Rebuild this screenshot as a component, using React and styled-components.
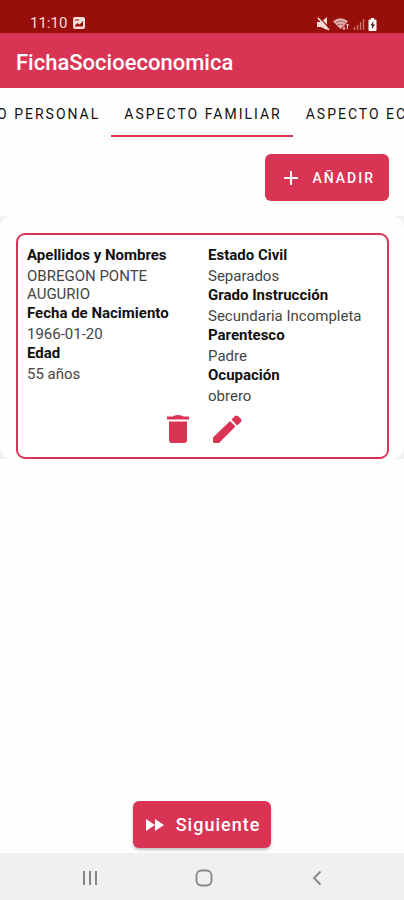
import React, { useState } from "react";
import styled, { createGlobalStyle } from "styled-components";

const GlobalStyle = createGlobalStyle`
  * {
    box-sizing: border-box;
  }
  body {
    margin: 0;
    background: #fefefe;
    font-family: Roboto, "Liberation Sans", sans-serif;
  }
  button {
    font-family: inherit;
    border: 0;
    cursor: pointer;
  }
`;

const Screen = styled.div`
  display: flex;
  flex-direction: column;
  min-height: 100vh;
  overflow-x: hidden;
`;

const StatusBar = styled.div`
  display: flex;
  align-items: flex-end;
  justify-content: space-between;
  height: 33px;
  padding: 0 27px 2px 30px;
  background: #970e0a;
  color: #f5dcd6;
  font-size: 15px;
  line-height: 16px;
`;

const StatusGroup = styled.div`
  display: flex;
  align-items: center;
  gap: ${(props) => props.$gap}px;
`;

const AppBar = styled.header`
  display: flex;
  align-items: center;
  height: 55px;
  padding: 3px 16px 0;
  background: #d93454;
`;

const PageTitle = styled.h1`
  margin: 0;
  color: #fff;
  font-size: 22px;
  font-weight: 500;
`;

const Tabs = styled.nav`
  display: grid;
  grid-template-columns: minmax(0, 1fr) auto minmax(0, 1fr);
  height: 49px;
`;

const TabSlot = styled.div`
  display: flex;
  justify-content: ${(props) => props.$side};
  overflow: hidden;
`;

const Tab = styled.button`
  flex: none;
  padding: 4px 11px 0 13px;
  background: none;
  border-bottom: 2px solid
    ${(props) => (props.$active ? "#d93454" : "transparent")};
  color: #111;
  font-size: 14px;
  font-weight: 400;
  letter-spacing: 2px;
  white-space: nowrap;
`;

const Toolbar = styled.div`
  display: flex;
  justify-content: flex-end;
  padding: 17px 15px 15px;
`;

const Button = styled.button`
  display: flex;
  align-items: center;
  gap: ${(props) => props.$gap}px;
  height: 47px;
  padding: 0 ${(props) => props.$end}px 0 ${(props) => props.$start}px;
  border-radius: 6px;
  background: #d93454;
  box-shadow: ${(props) =>
    props.$raised ? "0 2px 3px rgba(0, 0, 0, 0.25)" : "none"};
  color: #fff;
  font-size: ${(props) => props.$size}px;
  font-weight: 500;
  letter-spacing: ${(props) => props.$spacing}px;
`;

const ListArea = styled.main`
  background: #f1f1f1;
`;

const ListItem = styled.div`
  padding: 17px 15px 0 16px;
  border-radius: 12px;
  background: #fefefe;
`;

const Card = styled.article`
  padding: 11px 10px 10px 9px;
  border: 2px solid #d93454;
  border-radius: 9px;
  background: #fff;
`;

const Columns = styled.div`
  display: grid;
  grid-template-columns: 1fr 1fr;
  gap: 12px;
`;

const Fields = styled.dl`
  margin: 0;
  font-size: 15px;
`;

const Label = styled.dt`
  padding-bottom: 1px;
  color: #111;
  font-weight: 700;
  line-height: 18px;
`;

const Value = styled.dd`
  margin: 0;
  padding: 2px 24px 1px 0;
  color: #444;
  line-height: 18px;
  font-weight: 400;
`;

const WideValue = styled(Value)`
  padding-right: 0;
`;

const Actions = styled.div`
  display: flex;
  justify-content: center;
  gap: 13px;
  padding-top: 5px;
`;

const IconButton = styled.button`
  display: flex;
  padding: 0;
  background: none;
  color: #d93454;
`;

const Footer = styled.footer`
  display: flex;
  justify-content: center;
  margin-top: auto;
  padding-bottom: 5px;
`;

const NavigationBar = styled.div`
  display: flex;
  justify-content: space-between;
  align-items: center;
  height: 47px;
  padding: 2px 75px 0 78px;
  background: #f0f0f0;
`;

const NavButton = styled.button`
  display: flex;
  padding: 0;
  background: none;
  color: #858585;
`;

const PictureIcon = () => (
  <svg width="14" height="14" viewBox="0 0 14 14">
    <rect x="1" y="1" width="12" height="12" rx="2" fill="#f5dcd6" />
    <path d="M3 9.5 5.5 7l2 1.5L11 5v5.5H3z" fill="#970e0a" />
    <path d="M3 4h4" stroke="#970e0a" />
  </svg>
);

const MuteIcon = () => (
  <svg width="13" height="14" viewBox="0 0 13 14">
    <path d="M0 5h4l6-5v13L4 10H0z" fill="currentColor" />
    <path d="M2 0l11 12" stroke="#970e0a" strokeWidth="1.2" />
    <path d="M1 1l11 12" stroke="currentColor" strokeWidth="1.8" />
  </svg>
);

const WifiIcon = () => (
  <svg width="17" height="14" viewBox="0 0 17 14">
    <path d="M0 4.5Q7.5-2 15 4.5L7.5 12z" fill="currentColor" opacity=".8" />
    <path
      d="M2.5 6Q7.5 2 12.5 6M4.5 8Q7.5 6 10.5 8"
      fill="none"
      stroke="#970e0a"
      strokeWidth=".6"
    />
    <path
      d="M11 12.5V9m-1.5 2L11 12.5l1.5-1.5M14.5 7v5M13 8.5 14.5 7 16 8.5"
      fill="none"
      stroke="currentColor"
    />
  </svg>
);

const SignalIcon = () => (
  <svg width="12" height="12" viewBox="0 0 12 12" opacity=".5">
    <path
      d="M1.5 12V9M4.5 12V7M7.5 12V4M10.5 12V1"
      stroke="currentColor"
      strokeWidth="1.4"
    />
  </svg>
);

const BatteryIcon = () => (
  <svg width="9" height="13" viewBox="0 0 9 13">
    <path
      d="M3 0h3v1.5h1.5q1 0 1 1V12q0 1-1 1h-6q-1 0-1-1V2.500q0-1 1-1H3z"
      fill="#fff"
    />
    <path d="M5.5 3 2.500 7.500h1.800L3.800 11 7 6.500H5z" fill="#4a0d0a" />
  </svg>
);

const PlusIcon = () => (
  <svg width="20" height="20" viewBox="0 0 20 20">
    <path d="M10 3v14M3 10h14" stroke="currentColor" strokeWidth="2" />
  </svg>
);

const ForwardIcon = () => (
  <svg width="18" height="14" viewBox="0 0 18 14">
    <path d="M0 1l9 6-9 6zM9 1l9 6-9 6z" fill="currentColor" />
  </svg>
);

const TrashIcon = () => (
  <svg width="36" height="36" viewBox="0 0 36 36" fill="currentColor">
    <path d="M9 10.500h18V29q0 3-3 3H12q-3 0-3-3z" />
    <path d="M7 5.500h5.500Q14 4 18 4t5.500 1.500H29v3H7z" />
  </svg>
);

const PencilIcon = () => (
  <svg width="36" height="36" viewBox="0 0 36 36" fill="currentColor">
    <path d="M4 26.500 21 10l5.500 5.500L10 32H5q-1 0-1-1z" />
    <path d="M22.500 8.500 26 5q1.500-1.200 3 0l3 3q1.200 1.500 0 3l-4 3.500z" />
  </svg>
);

const RecentsIcon = () => (
  <svg width="24" height="24" viewBox="0 0 24 24">
    <path d="M6 5v14M12 5v14M18 5v14" stroke="currentColor" strokeWidth="2" />
  </svg>
);

const HomeIcon = () => (
  <svg width="24" height="24" viewBox="0 0 24 24">
    <rect
      x="4.5"
      y="4.5"
      width="15"
      height="15"
      rx="5"
      fill="none"
      stroke="currentColor"
      strokeWidth="1.8"
    />
  </svg>
);

const BackIcon = () => (
  <svg width="24" height="24" viewBox="0 0 24 24">
    <path
      d="M15.5 5.5 9 12l6.500 6.500"
      fill="none"
      stroke="currentColor"
      strokeWidth="1.8"
    />
  </svg>
);

const App = () => {
  const [activeTab, setActiveTab] = useState("familiar");

  return (
    <Screen>
      <GlobalStyle />
      <StatusBar>
        <StatusGroup $gap={5}>
          <span>11:10</span>
          <PictureIcon />
        </StatusGroup>
        <StatusGroup $gap={3}>
          <MuteIcon />
          <WifiIcon />
          <SignalIcon />
          <BatteryIcon />
        </StatusGroup>
      </StatusBar>
      <AppBar>
        <PageTitle>FichaSocioeconomica</PageTitle>
      </AppBar>
      <Tabs>
        {tabs.map((tab) => (
          <TabSlot key={tab.id} $side={tab.side}>
            <Tab
              $active={activeTab === tab.id}
              onClick={() => setActiveTab(tab.id)}
            >
              {tab.title}
            </Tab>
          </TabSlot>
        ))}
      </Tabs>
      <Toolbar>
        <Button $start={16} $end={14} $gap={11} $size={14} $spacing={2}>
          <PlusIcon />
          AÑADIR
        </Button>
      </Toolbar>
      <ListArea>
        <ListItem>
          <Card>
            <Columns>
              <Fields>
                <Label>Apellidos y Nombres</Label>
                <Value>OBREGON PONTE AUGURIO</Value>
                <Label>Fecha de Nacimiento</Label>
                <Value>1966-01-20</Value>
                <Label>Edad</Label>
                <Value>55 años</Value>
              </Fields>
              <Fields>
                <Label>Estado Civil</Label>
                <WideValue>Separados</WideValue>
                <Label>Grado Instrucción</Label>
                <WideValue>Secundaria Incompleta</WideValue>
                <Label>Parentesco</Label>
                <WideValue>Padre</WideValue>
                <Label>Ocupación</Label>
                <WideValue>obrero</WideValue>
              </Fields>
            </Columns>
            <Actions>
              <IconButton aria-label="Eliminar">
                <TrashIcon />
              </IconButton>
              <IconButton aria-label="Editar">
                <PencilIcon />
              </IconButton>
            </Actions>
          </Card>
        </ListItem>
      </ListArea>
      <Footer>
        <Button $raised $start={13} $end={11} $gap={12} $size={18} $spacing={1}>
          <ForwardIcon />
          Siguiente
        </Button>
      </Footer>
      <NavigationBar>
        <NavButton aria-label="Recientes">
          <RecentsIcon />
        </NavButton>
        <NavButton aria-label="Inicio">
          <HomeIcon />
        </NavButton>
        <NavButton aria-label="Atrás">
          <BackIcon />
        </NavButton>
      </NavigationBar>
    </Screen>
  );
};
export default App;

const tabs = [
  { id: "personal", title: "ASPECTO PERSONAL", side: "flex-end" },
  { id: "familiar", title: "ASPECTO FAMILIAR", side: "center" },
  { id: "economico", title: "ASPECTO ECONOMICO", side: "flex-start" },
];
